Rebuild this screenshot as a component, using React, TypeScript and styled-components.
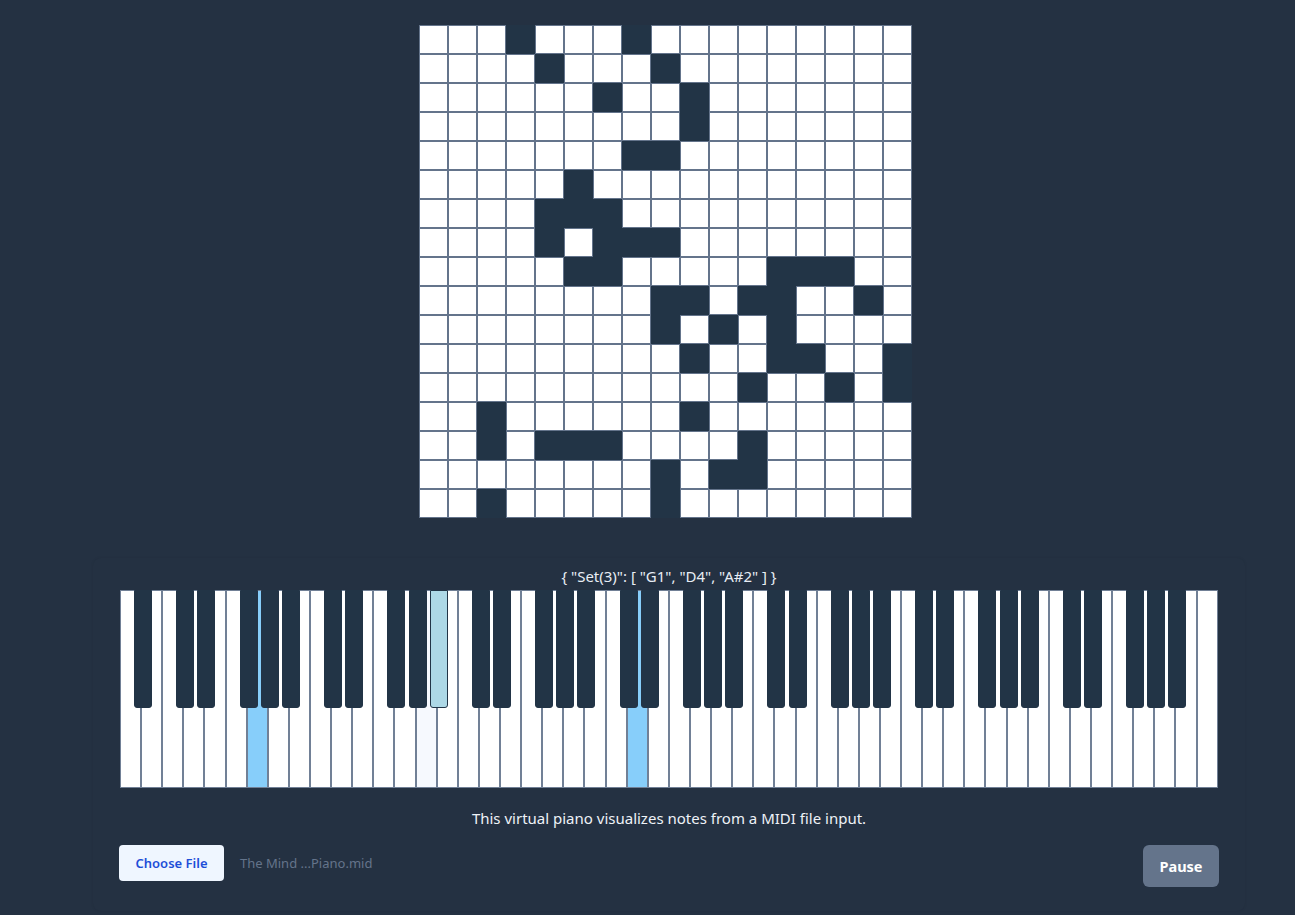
import React from "react";
import styled, { createGlobalStyle } from "styled-components";

const GlobalStyle = createGlobalStyle`
  html, body {
    margin: 0;
    padding: 0;
    background: #243142;
  }
  body {
    font-family: "Noto Sans", "Open Sans", sans-serif;
    color: #e2e8f0;
  }
`;

const Page = styled.main`
  min-height: 915px;
  box-sizing: border-box;
  padding: 25px 50px 0 93px;
  display: flex;
  flex-direction: column;
  align-items: stretch;
`;

const GridWrap = styled.div`
  display: flex;
  justify-content: center;
  padding-right: 7px;
`;

const Grid = styled.div`
  display: grid;
  grid-template-columns: repeat(17, 29px);
  grid-auto-rows: 29px;
`;

const Cell = styled.div<{ $on: boolean }>`
  box-sizing: border-box;
  border: 1px solid ${(p) => (p.$on ? "#223446" : "#64748b")};
  background: ${(p) => (p.$on ? "#223446" : "#ffffff")};
`;

const Card = styled.section`
  margin-top: 40px;
  box-sizing: border-box;
  width: 1152px;
  padding: 8px 27px 24px;
  border-radius: 8px;
  background: #243142;
  box-shadow: 0 0 3px rgba(0, 0, 0, 0.08);
  display: flex;
  flex-direction: column;
`;

const NotesLabel = styled.div`
  text-align: center;
  font-size: 15px;
  line-height: 20px;
  margin-bottom: 4px;
  color: #e8edf4;
`;

const Keyboard = styled.div`
  display: flex;
  height: 198px;
`;

const WhiteKey = styled.div<{ $active: boolean; $soft: boolean }>`
  position: relative;
  flex: 1 1 0;
  box-sizing: border-box;
  border: 1px solid #718096;
  background: ${(p) => (p.$active ? "#87cefa" : p.$soft ? "#f6f9fe" : "#ffffff")};
`;

const BlackKey = styled.div<{ $active: boolean }>`
  position: absolute;
  z-index: 1;
  top: -1px;
  right: -12px;
  width: 18px;
  height: 118px;
  box-sizing: border-box;
  border: 1px solid #223446;
  border-radius: 0 0 3px 3px;
  background: ${(p) => (p.$active ? "#add8e6" : "#223446")};
`;

const Caption = styled.p`
  margin: 19px 0 0;
  text-align: center;
  font-size: 15px;
  line-height: 22px;
  color: #eef2f7;
`;

const Controls = styled.div`
  margin-top: 16px;
  display: flex;
  justify-content: space-between;
  align-items: flex-start;
`;

const FilePicker = styled.div`
  display: flex;
  align-items: center;
  gap: 16px;
  margin-left: -1px;
`;

const ChooseButton = styled.button`
  height: 36px;
  width: 105px;
  border: none;
  border-radius: 4px;
  background: #eff6ff;
  color: #1d4ed8;
  font-family: "Noto Sans", "Open Sans", sans-serif;
  font-size: 13px;
  font-weight: 600;
  padding: 0;
  cursor: pointer;
`;

const FileName = styled.span`
  font-size: 13px;
  color: #64748b;
`;

const PauseButton = styled.button`
  height: 42px;
  width: 76px;
  margin-right: -1px;
  border: none;
  border-radius: 6px;
  background: #64748b;
  color: #ffffff;
  font-family: "Noto Sans", "Open Sans", sans-serif;
  font-size: 14.5px;
  font-weight: 700;
  padding: 0;
  cursor: pointer;
`;

const DARK: Record<number, number[]> = {
  0: [3, 7],
  1: [4, 8],
  2: [6, 9],
  3: [9],
  4: [7, 8],
  5: [5],
  6: [4, 5, 6],
  7: [4, 6, 7, 8],
  8: [5, 6, 12, 13, 14],
  9: [8, 9, 11, 12, 15],
  10: [8, 10, 12],
  11: [9, 12, 13, 16],
  12: [11, 14, 16],
  13: [2, 9],
  14: [2, 4, 5, 6, 11],
  15: [8, 10, 11],
  16: [2, 8],
};

const LETTERS = ["A", "B", "C", "D", "E", "F", "G"];
const WITH_SHARP = new Set(["A", "C", "D", "F", "G"]);

type WhiteNote = { name: string; sharp: string | null };

const whiteNotes: WhiteNote[] = Array.from({ length: 52 }, (_, i) => {
  const letter = LETTERS[i % 7];
  const octave = i < 2 ? 0 : Math.floor((i - 2) / 7) + 1;
  const name = `${letter}${octave}`;
  const sharp = i < 51 && WITH_SHARP.has(letter) ? `${letter}#${octave}` : null;
  return { name, sharp };
});

const activeNotes = new Set(["G1", "D4", "A#2"]);

export default function App() {
  return (
    <>
      <GlobalStyle />
      <Page>
        <GridWrap>
          <Grid>
            {Array.from({ length: 17 * 17 }, (_, idx) => {
              const r = Math.floor(idx / 17);
              const c = idx % 17;
              return <Cell key={idx} $on={DARK[r].includes(c)} />;
            })}
          </Grid>
        </GridWrap>
        <Card>
          <NotesLabel>{'{ "Set(3)": [ "G1", "D4", "A#2" ] }'}</NotesLabel>
          <Keyboard>
            {whiteNotes.map((n) => (
              <WhiteKey key={n.name} $active={activeNotes.has(n.name)} $soft={n.name === "A2"}>
                {n.sharp && <BlackKey $active={activeNotes.has(n.sharp)} />}
              </WhiteKey>
            ))}
          </Keyboard>
          <Caption>This virtual piano visualizes notes from a MIDI file input.</Caption>
          <Controls>
            <FilePicker>
              <ChooseButton type="button">Choose File</ChooseButton>
              <FileName>The Mind ...Piano.mid</FileName>
            </FilePicker>
            <PauseButton type="button">Pause</PauseButton>
          </Controls>
        </Card>
      </Page>
    </>
  );
}
